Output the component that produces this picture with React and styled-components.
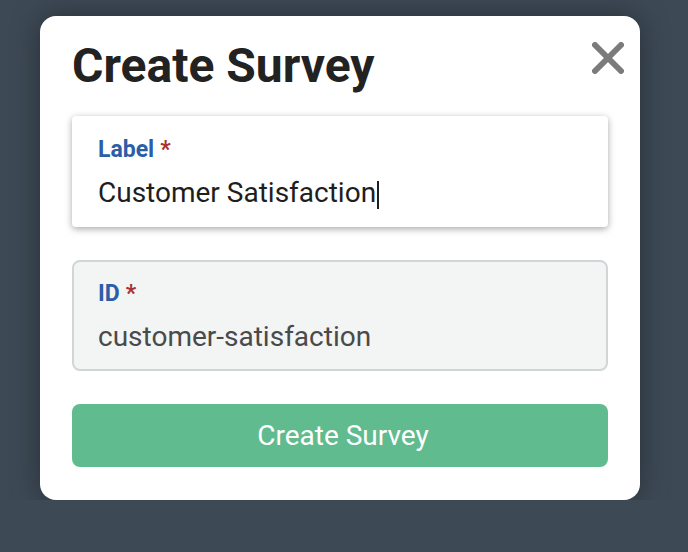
import React from 'react';
import styled, { createGlobalStyle } from 'styled-components';

const GlobalStyle = createGlobalStyle`
  html, body {
    margin: 0;
    padding: 0;
    background: #3d4955;
    font-family: Roboto, "Liberation Sans", sans-serif;
  }
`;

const Backdrop = styled.div`
  height: 500px;
  overflow: hidden;
  display: flex;
  padding: 16px 0 0 40px;
  box-sizing: border-box;
`;

const Modal = styled.div`
  position: relative;
  width: 600px;
  height: 484px;
  box-sizing: border-box;
  background: #fff;
  border-radius: 16px;
  padding: 25px 32px 0;
  box-shadow: 0 0 30px rgba(0, 0, 0, 0.35);
  display: flex;
  flex-direction: column;
`;

const Title = styled.h1`
  margin: 0 0 25px;
  font-size: 48px;
  line-height: 50px;
  font-weight: 700;
  color: #222;
`;

const CloseButton = styled.button`
  position: absolute;
  top: 26px;
  right: 16px;
  width: 32px;
  height: 32px;
  padding: 0;
  border: none;
  background: none;
  cursor: pointer;
  display: flex;
`;

const Field = styled.div`
  box-sizing: border-box;
  height: 111px;
  padding: ${p => (p.focused ? '20px 26px 0' : '18px 24px 0')};
  border-radius: ${p => (p.focused ? '4px' : '8px')};
  background: ${p => (p.focused ? '#fff' : '#f3f4f4')};
  border: ${p => (p.focused ? 'none' : '2px solid #d2d5d8')};
  box-shadow: ${p => (p.focused ? '0 2px 7px rgba(0, 0, 0, 0.35)' : 'none')};
  margin-bottom: 33px;
  display: flex;
  flex-direction: column;
  gap: 11px;
`;

const FieldLabel = styled.label`
  font-size: 23px;
  line-height: 28px;
  font-weight: 700;
  color: #2b5ea7;
`;

const Required = styled.span`
  color: #a83232;
  margin-left: 6px;
`;

const Value = styled.div`
  font-size: 28px;
  line-height: 36px;
  color: ${p => (p.muted ? '#4a4a4a' : '#1e1e1e')};
  display: flex;
  align-items: center;
`;

const Caret = styled.span`
  display: inline-block;
  width: 2px;
  height: 28px;
  background: #1e1e1e;
  margin-left: 1px;
  margin-top: 4px;
`;

const SubmitButton = styled.button`
  height: 63px;
  border: none;
  border-radius: 8px;
  background: #60bc8f;
  color: #fff;
  font-family: Roboto, "Liberation Sans", sans-serif;
  font-size: 28px;
  padding: 0 0 0 6px;
  cursor: pointer;
`;

export default function App() {
  return (
    <>
      <GlobalStyle />
      <Backdrop>
        <Modal>
          <Title>Create Survey</Title>
          <CloseButton aria-label="Close">
            <svg width="32" height="32" viewBox="0 0 32 32">
              <path d="M3 3 L29 29 M29 3 L3 29" stroke="#7b7b7b" strokeWidth="6" strokeLinecap="round" />
            </svg>
          </CloseButton>
          <Field focused>
            <FieldLabel>
              Label<Required>*</Required>
            </FieldLabel>
            <Value>
              Customer Satisfaction<Caret />
            </Value>
          </Field>
          <Field>
            <FieldLabel>
              ID<Required>*</Required>
            </FieldLabel>
            <Value muted>customer-satisfaction</Value>
          </Field>
          <SubmitButton>Create Survey</SubmitButton>
        </Modal>
      </Backdrop>
    </>
  );
}
